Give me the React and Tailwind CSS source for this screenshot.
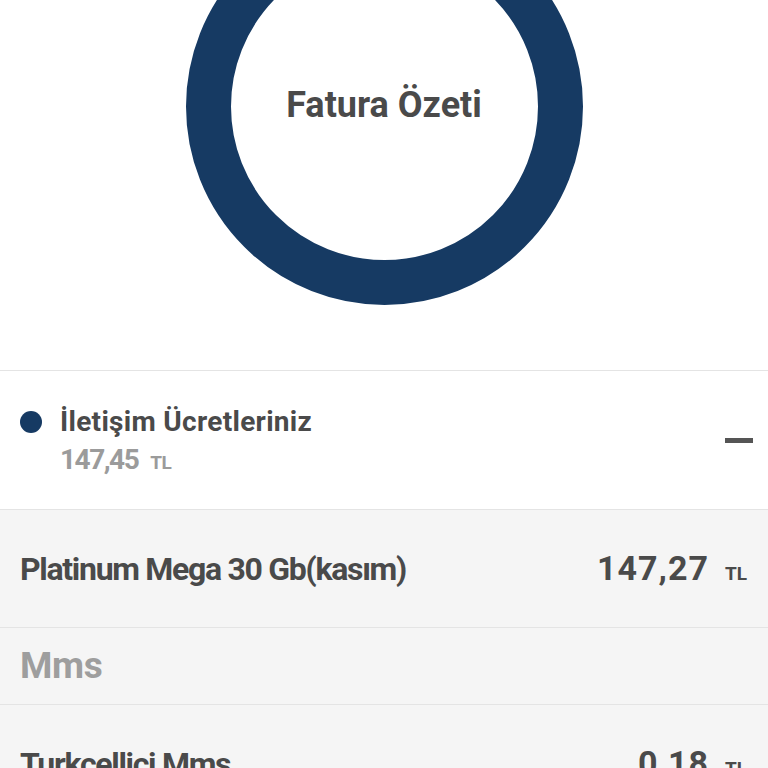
import React from 'react';

const font = { fontFamily: 'Roboto, "Noto Sans", "Liberation Sans", sans-serif' };

function Amount({ value, big }) {
    return (
        <div className="flex items-baseline">
            <span className={big ? 'text-[34px] leading-[40px] font-bold tracking-[1px] text-[#4a4a4a]' : 'text-[28px] leading-[32px] font-bold tracking-[-1.5px] text-[#9b9b9b]'}>
                {value}
            </span>
            <span className={big ? 'ml-[16px] text-[19px] font-bold text-[#4a4a4a]' : 'ml-[12px] text-[19px] font-bold tracking-[-0.5px] text-[#9b9b9b]'}>
                TL
            </span>
        </div>
    );
}

function ItemRow({ title, value }) {
    return (
        <div className="h-[118px] flex items-center justify-between pl-[20px] pr-[21px] bg-[#f5f5f5] border-b border-[#e4e4e4]">
            <span className="text-[32px] font-bold text-[#4a4a4a] tracking-[-1.3px]">{title}</span>
            <Amount value={value} big />
        </div>
    );
}

export default function App() {
    return (
        <div className="w-[768px] h-[768px] overflow-hidden bg-white" style={font}>
            {/* grafik alanı */}
            <div className="h-[371px] border-b border-[#e4e4e4] flex justify-center overflow-hidden">
                <div className="mt-[-92px] w-[397px] h-[397px] shrink-0 rounded-full border-[45px] border-[#163a63] flex items-center justify-center">
                    <span className="text-[36px] font-bold text-[#4a4a4a] mb-[4px]">Fatura Özeti</span>
                </div>
            </div>

            {/* iletişim ücretleri */}
            <div className="h-[139px] flex items-center justify-between pl-[20px] pr-[15px] border-b border-[#e4e4e4]">
                <div className="flex flex-col mt-[4px]">
                    <div className="flex items-center">
                        <span className="w-[22px] h-[22px] rounded-full bg-[#163a63]"></span>
                        <span className="ml-[18px] text-[28px] leading-[32px] font-bold tracking-[0.3px] text-[#4a4a4a]">İletişim Ücretleriniz</span>
                    </div>
                    <div className="pl-[40px] mt-[6px]">
                        <Amount value="147,45" />
                    </div>
                </div>
                <span className="w-[28px] h-[5px] bg-[#555555]"></span>
            </div>

            <ItemRow title="Platinum Mega 30 Gb(kasım)" value="147,27" />

            <div className="h-[77px] flex items-center pl-[20px] bg-[#f5f5f5] border-b border-[#e4e4e4]">
                <span className="text-[37px] font-bold tracking-[-0.3px] text-[#9e9e9e]">Mms</span>
            </div>

            <ItemRow title="Turkcellici Mms" value="0,18" />
        </div>
    );
}
